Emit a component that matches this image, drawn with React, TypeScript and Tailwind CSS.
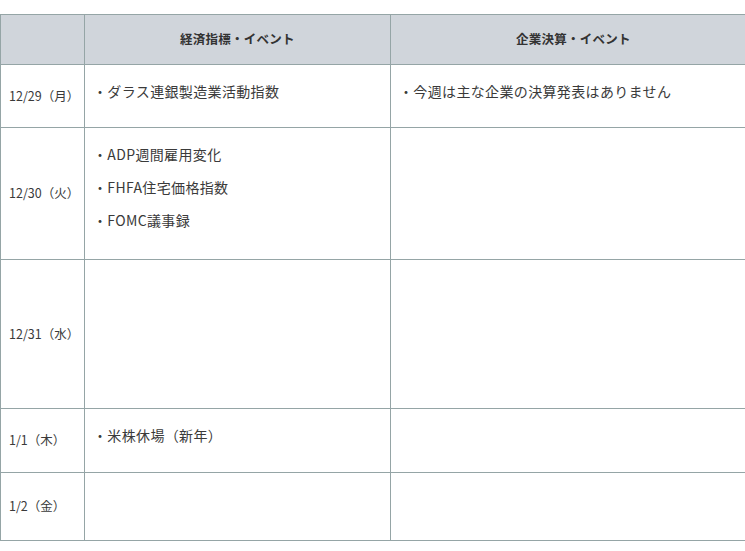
const rows: { date: string; events: string[]; earnings: string[]; h: string }[] = [
  { date: "12/29（月）", events: ["ダラス連銀製造業活動指数"], earnings: ["今週は主な企業の決算発表はありません"], h: "h-[63px]" },
  { date: "12/30（火）", events: ["ADP週間雇用変化", "FHFA住宅価格指数", "FOMC議事録"], earnings: [], h: "h-[132px]" },
  { date: "12/31（水）", events: [], earnings: [], h: "h-[149px]" },
  { date: "1/1（木）", events: ["米株休場（新年）"], earnings: [], h: "h-[64px]" },
  { date: "1/2（金）", events: [], earnings: [], h: "h-[68px]" },
];

function Items({ list }: { list: string[] }) {
  return (
    <ul className="flex flex-col gap-3">
      {list.map((t) => (
        <li key={t} className="text-[14px] leading-[21px] tracking-[0.35px] text-[#3a3a3a]">
          ・{t}
        </li>
      ))}
    </ul>
  );
}

export default function App() {
  return (
    <div
      className="h-[551px] w-[745px] overflow-hidden bg-white pt-[14px]"
      style={{ fontFamily: '"Noto Sans CJK JP", "Noto Sans", sans-serif' }}
    >
      <table className="w-[757px] table-fixed border-collapse">
        <colgroup>
          <col className="w-[84px]" />
          <col className="w-[306px]" />
          <col />
        </colgroup>
        <thead>
          <tr className="h-[50px] bg-[#d0d5db]">
            <th className="border border-[#95a5a6]" />
            <th className="border border-[#95a5a6] text-center text-[12.5px] font-bold tracking-[0.25px] text-[#333]">
              経済指標・イベント
            </th>
            <th className="border border-[#95a5a6] text-center text-[12.5px] font-bold tracking-[0.25px] text-[#333]">
              企業決算・イベント
            </th>
          </tr>
        </thead>
        <tbody>
          {rows.map((r) => (
            <tr key={r.date} className={r.h}>
              <td className="border border-[#95a5a6] px-2 align-middle text-[12.5px] text-[#3a3a3a]">
                {r.date}
              </td>
              <td className="border border-[#95a5a6] px-2 pt-[16px] align-top">
                <Items list={r.events} />
              </td>
              <td className="border border-[#95a5a6] px-2 pt-[16px] align-top">
                <Items list={r.earnings} />
              </td>
            </tr>
          ))}
        </tbody>
      </table>
    </div>
  );
}
